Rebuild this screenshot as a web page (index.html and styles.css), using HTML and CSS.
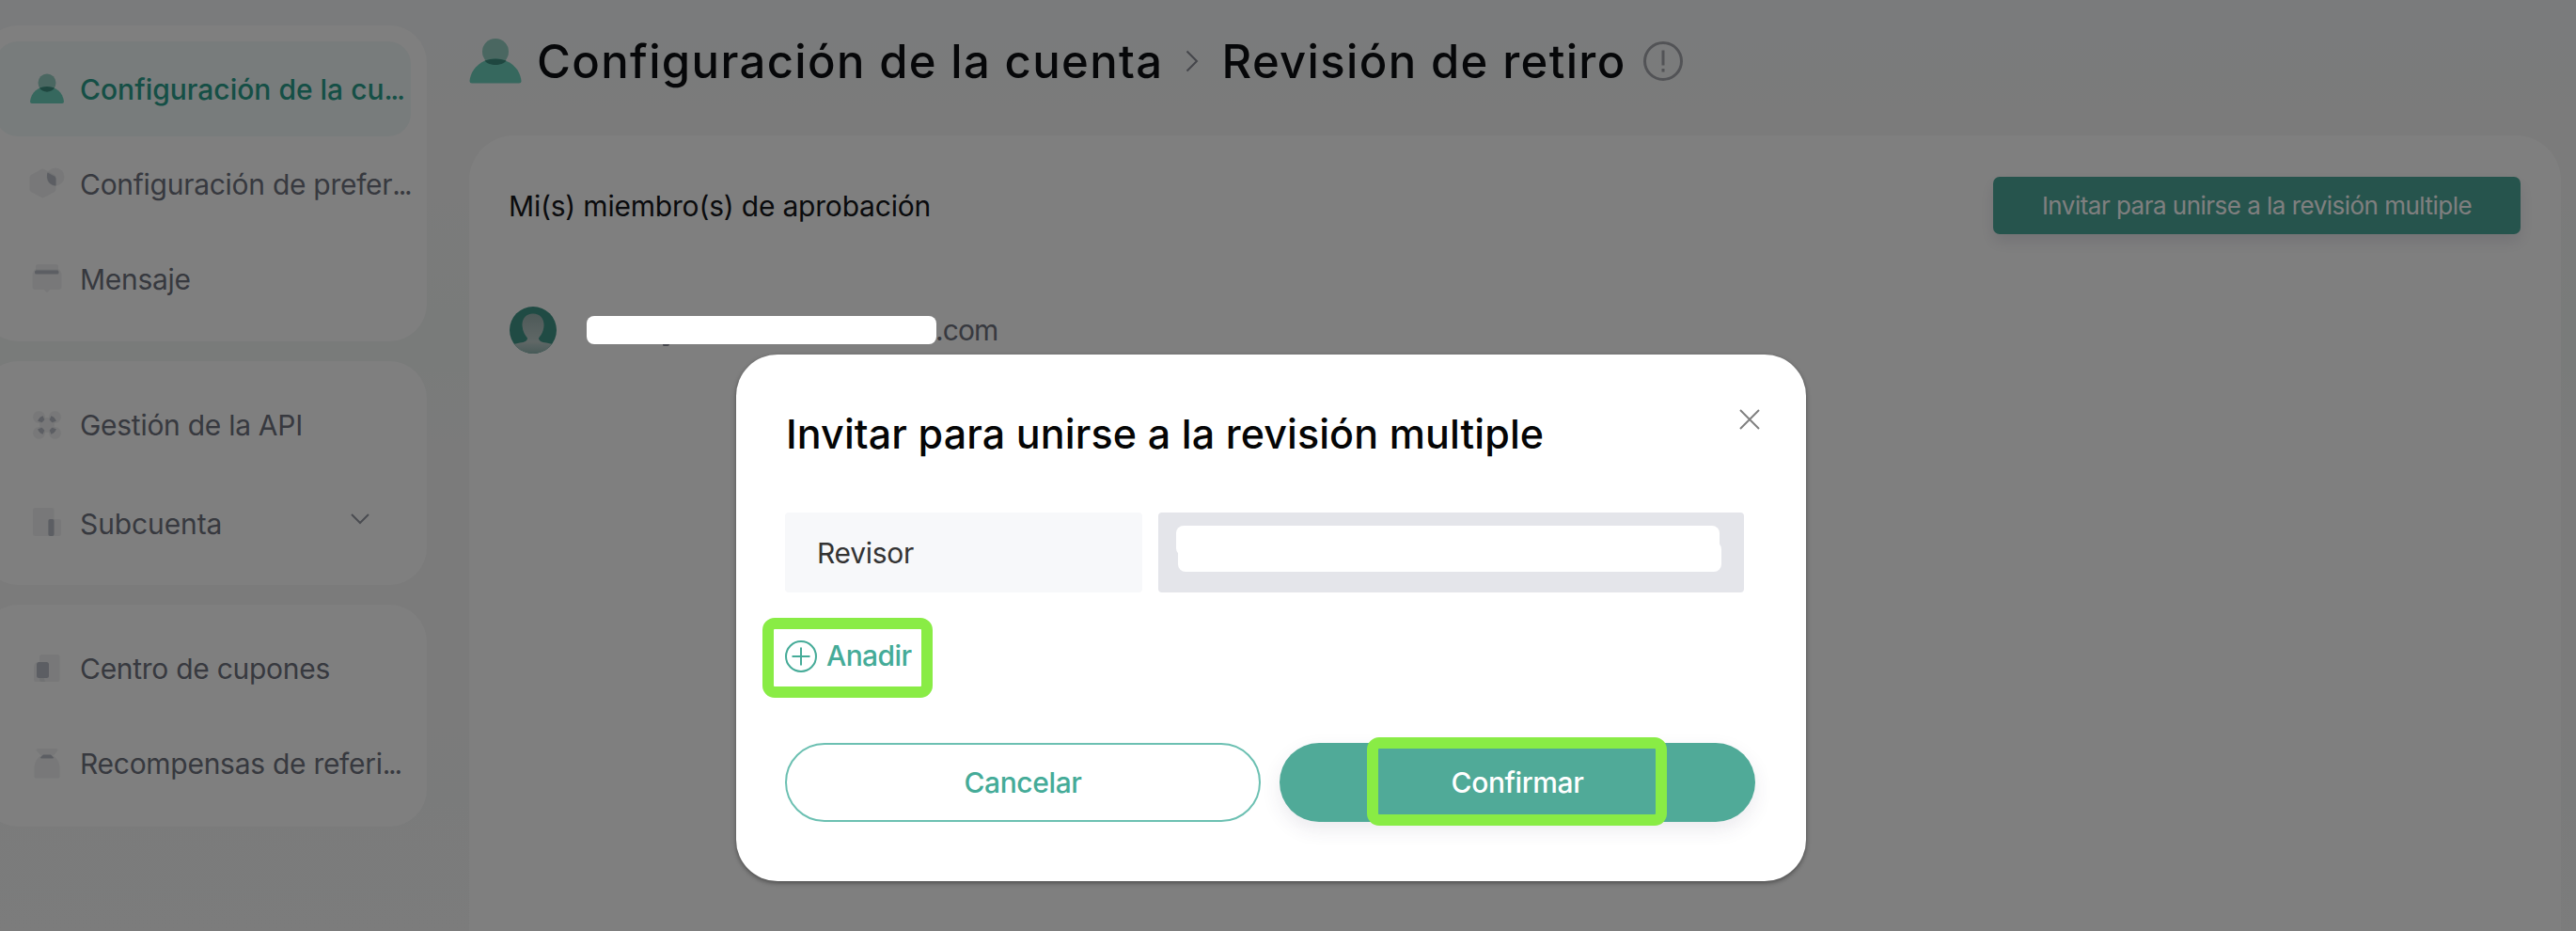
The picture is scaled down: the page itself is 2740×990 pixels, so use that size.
FILE: index.html
```html
<!DOCTYPE html>
<html lang="es">
<head>
    <meta charset="UTF-8">
    <meta name="viewport" content="width=device-width, initial-scale=1.0">
    <title>Revisión de retiro</title>
    <link rel="stylesheet" href="styles.css">
</head>
<body>
    <div class="page">
        <nav class="sidebar">
            <ul class="menu menu-account">
                <li class="item active">
                    <svg class="icon" viewBox="0 0 40 40"><circle class="back" cx="20" cy="13" r="9.5"/><path class="mid" d="M2 33C3 23 11 17 20 17s17 6 18 16q0 2-2 2H4q-2 0-2-2z"/><path class="dark" d="M12 18.500Q20 15.500 28 18.500C25 24 15 24 12 18.500z"/></svg>
                    <span>Configuración de la cu<span class="dots">...</span></span>
                </li>
                <li class="item">
                    <svg class="icon" viewBox="0 0 40 40"><path class="soft" d="M14 4q1.500-.8 3 0l11 6q1.500 1 1.500 2.500v13q0 1.500-1.500 2.500l-11 6q-1.500.8-3 0L3 28q-1.500-1-1.500-2.500v-13Q1.500 11 3 10z"/><circle class="soft" cx="29" cy="12" r="9.500"/><path class="deep" d="M20.500 7.500l7.500 4q1.500 1 1.500 2.500v7.500c-7 0-11-7-9-14z"/></svg>
                    <span>Configuración de prefer<span class="dots">...</span></span>
                </li>
                <li class="item">
                    <svg class="icon" viewBox="0 0 40 40"><rect class="soft" x="8" y="4" width="24" height="9" rx="2"/><path class="soft" d="M7 9.500h26q2.500 3 2.500 5V28q0 3-3 3h-9L20 34l-3.500-3h-9q-3 0-3-3V14.500q0-2 2.500-5z"/><rect class="deep" x="7" y="10.500" width="25.500" height="4" rx="1.500"/></svg>
                    <span>Mensaje</span>
                </li>
            </ul>
            <ul class="menu menu-api">
                <li class="item">
                    <svg class="icon" viewBox="0 0 40 40"><g class="soft"><circle cx="11.500" cy="11.500" r="6.500"/><circle cx="28.500" cy="11.500" r="6.500"/><circle cx="11.500" cy="28.500" r="6.500"/><circle cx="28.500" cy="28.500" r="6.500"/><circle cx="20" cy="20" r="8"/></g><path class="ring" d="M12.500 16.500q1-3 4-4M23.500 12.500q3 1 4 4M27.500 23.500q-1 3-4 4M16.500 27.500q-3-1-4-4"/></svg>
                    <span>Gestión de la API</span>
                </li>
                <li class="item">
                    <svg class="icon" viewBox="0 0 40 40"><rect class="soft" x="5" y="3" width="22.500" height="30" rx="2.500"/><rect class="soft" x="21" y="15" width="14" height="18" rx="2"/><rect class="deep" x="21.500" y="15" width="6" height="18" rx="2"/></svg>
                    <span>Subcuenta</span>
                    <svg class="arrow" viewBox="0 0 20 12"><path d="M1 1l9 9 9-9"/></svg>
                </li>
            </ul>
            <ul class="menu menu-rewards">
                <li class="item">
                    <svg class="icon" viewBox="0 0 40 40"><rect class="soft" x="12" y="5" width="21.500" height="29" rx="2.500"/><path class="soft" d="M12 13q-6 0-6 5v14q0 2 2 2h10z"/><rect class="deep" x="9" y="13" width="13" height="17" rx="2.500"/></svg>
                    <span>Centro de cupones</span>
                </li>
                <li class="item">
                    <svg class="icon" viewBox="0 0 40 40"><path class="soft" d="M10 4h20q2 0 1.500 2l-4 5H13L8.500 6Q8 4 10 4z"/><path class="soft" d="M14 11h12q7 4 7.500 13v10q0 1.500-1.500 1.500H8q-1.500 0-1.500-1.500V24Q7 15 14 11z"/><path class="deep" d="M16 10.500h8l3 3q0 1-1 1H14q-1 0-1-1z"/></svg>
                    <span>Recompensas de referi<span class="dots">...</span></span>
                </li>
            </ul>
        </nav>

        <main class="content">
            <header class="title">
                <svg class="title-icon" viewBox="0 0 56 48"><circle class="back" cx="28" cy="14" r="14"/><path class="mid" d="M.5 45C2 31 14 21.500 28 21.500S54 31 55.500 45q0 2.500-2.500 2.500H3Q.5 47.500.5 45z"/><path class="dark" d="M16.500 23.500Q28 19.500 39.500 23.500C35 29.500 21 29.500 16.500 23.500z"/></svg>
                <h1>Configuración de la cuenta</h1>
                <svg class="crumb" viewBox="0 0 14 24"><path d="M1.500 1.500L12 12 1.500 22.500"/></svg>
                <h1>Revisión de retiro</h1>
                <svg class="info" viewBox="0 0 42 42"><circle cx="21" cy="21" r="19.500"/><path d="M21 9.500v16M21 29v3.500"/></svg>
            </header>

            <section class="panel">
                <div class="panel-head">
                    <h2>Mi(s) miembro(s) de aprobación</h2>
                    <button class="invite">Invitar para unirse a la revisión multiple</button>
                </div>
                <div class="member">
                    <svg class="avatar" viewBox="0 0 50 50">
                        <defs>
                            <clipPath id="round"><circle cx="25" cy="25" r="25"/></clipPath>
                            <linearGradient id="body" x1="0" y1="0" x2="0" y2="1"><stop offset="0" stop-color="#9cb4b1"/><stop offset=".7" stop-color="#c0cfcd"/><stop offset="1" stop-color="#8fb5b0"/></linearGradient>
                        </defs>
                        <g clip-path="url(#round)">
                            <rect width="50" height="50" fill="#409789"/>
                            <path d="M25 7.500c8 0 12 6 11.500 13-.4 6-3 10-5.500 13 0 3 3 4.500 8 5l9 2v10H2v-10l9-2c5-.5 8-2 8-5-2.500-3-5-7-5.500-13C13 13.500 17 7.500 25 7.500z" fill="url(#body)"/>
                        </g>
                    </svg>
                    <span class="mail">.com</span>
                </div>
            </section>
        </main>
    </div>

    <div class="overlay">
        <span class="mask mask-mail"></span>
        <div class="modal">
            <div class="modal-head">
                <h3>Invitar para unirse a la revisión multiple</h3>
                <svg class="close" viewBox="0 0 22 22"><path d="M1 1l20 20M21 1L1 21"/></svg>
            </div>
            <div class="field">
                <label>Revisor</label>
                <div class="input">
                    <span class="mask mask-top"></span>
                    <span class="mask mask-bottom"></span>
                </div>
            </div>
            <div class="add">
                <svg class="plus" viewBox="0 0 34 34"><circle cx="17" cy="17" r="16"/><path d="M17 7.500v19M7.500 17h19"/></svg>
                <span>Anadir</span>
            </div>
            <div class="actions">
                <button class="btn cancel">Cancelar</button>
                <button class="btn confirm">Confirmar</button>
            </div>
        </div>
    </div>
</body>
</html>
```

FILE: styles.css
```css
*,
*::before,
*::after {
    box-sizing: border-box;
}

body {
    margin: 0;
    height: 990px;
    overflow: hidden;
    font-family: Inter, "Open Sans", sans-serif;
    font-size: 30px;
    letter-spacing: -0.28px;
    color: #6f737f;
    background: linear-gradient(#f5f6f9 0, #f5f7f7 80px, #f7f7f6 150px, #f6f6f6 210px, #f3f6f5 330px, #f3f6f5 390px, #f7f7f7 500px, #f7f7f7 690px, #f5f7f7 850px, #f8f8f8 990px);
}

h1, h2, h3, ul {
    margin: 0;
    padding: 0;
    font-weight: 400;
}

button {
    font-family: inherit;
    border: none;
    padding: 0;
}

svg {
    display: block;
    flex: none;
}

h1, h2, h3, .item {
    white-space: nowrap;
}

.page {
    display: flex;
    gap: 45px;
    height: 990px;
    overflow: hidden;
}

/* sidebar */
.sidebar {
    flex: none;
    width: 474px;
    margin-left: -20px;
    padding-top: 27px;
    display: flex;
    flex-direction: column;
    gap: 21px;
}

.menu {
    list-style: none;
    background: #fff;
    border-radius: 40px;
    padding: 17px 17px 0 15px;
}

.menu-account {
    height: 336px;
}

.menu-api {
    height: 238px;
}

.menu-rewards {
    height: 236px;
}

.item {
    display: flex;
    align-items: center;
    height: 101px;
    padding-left: 35px;
    border-radius: 24px;
}

.menu-api .item + .item {
    margin-top: 4px;
    letter-spacing: -0.1px;
}

.item.active {
    background: #f1f8f8;
    color: #2b9f8c;
    font-weight: 500;
    letter-spacing: 0;
}

.dots,
.active .dots {
    letter-spacing: -2.3px;
}

.icon {
    width: 40px;
    height: 40px;
    margin-right: 15px;
}

.soft {
    fill: #6f7481;
    fill-opacity: .1;
}

.deep {
    fill: #b8bcc6;
}

.ring {
    fill: none;
    stroke: #b8bcc6;
    stroke-width: 5;
}

.mid {
    fill: #6cd0bc;
}

.back {
    fill: #94cec2;
}

.dark {
    fill: #3f8f80;
}

.arrow {
    width: 20px;
    height: 12px;
    margin: -10px 0 0 137px;
    fill: none;
    stroke: #9598a2;
    stroke-width: 2;
}

/* content */
.content {
    flex: none;
    width: 2225px;
}

.title {
    display: flex;
    align-items: center;
    height: 144px;
    padding-bottom: 14px;
}

.title h1 {
    font-size: 49px;
    font-weight: 500;
    letter-spacing: 1.35px;
    color: #0d0f12;
}

.title-icon {
    width: 56px;
    height: 48px;
    margin-right: 16px;
}

.crumb {
    width: 14px;
    height: 24px;
    margin: 0 24px;
    fill: none;
    stroke: #8a8d97;
    stroke-width: 2;
}

.info {
    width: 42px;
    height: 42px;
    margin-left: 18px;
    fill: none;
    stroke: #a4a6ac;
    stroke-width: 3;
}

.panel {
    height: 900px;
    padding: 44px 43px;
    background: #fff;
    border-radius: 48px;
}

.panel-head {
    display: flex;
    align-items: center;
    justify-content: space-between;
}

.panel-head h2 {
    margin-left: -1px;
    font-size: 30px;
    letter-spacing: -0.2px;
    color: #15161a;
}

.invite {
    width: 561px;
    height: 61px;
    padding-bottom: 1px;
    font-size: 26px;
    letter-spacing: -0.52px;
    color: #fff;
    background: #4ca89a;
    border-radius: 7px;
    box-shadow: 0 8px 16px rgba(60, 50, 90, .12);
}

.member {
    display: flex;
    align-items: center;
    height: 50px;
    margin-top: 77px;
}

.avatar {
    width: 50px;
    height: 50px;
}

.mail {
    margin-left: 403px;
    letter-spacing: -0.9px;
}

/* modal */
.overlay {
    position: absolute;
    inset: 0;
    padding: 377px 0 0 783px;
    background: rgba(0, 0, 0, .5);
}

.mask {
    background: #fff;
    border-radius: 8px;
}

.mask-mail {
    position: absolute;
    left: 624px;
    top: 336px;
    width: 372px;
    height: 30px;
}

/* tail of the address left showing under the mask */
.mask-mail::after {
    content: "";
    position: absolute;
    left: 81px;
    top: 30px;
    width: 7px;
    height: 2px;
    background: #45464c;
    border-radius: 0 0 3px 2px;
}

.modal {
    width: 1138px;
    height: 560px;
    padding: 0 54px 0 52px;
    background: #fff;
    border-radius: 44px;
    box-shadow: 0 2px 5px rgba(0, 0, 0, .4);
}

.modal-head {
    display: flex;
    justify-content: space-between;
    height: 168px;
    padding-top: 58px;
}

.modal-head h3 {
    margin-left: 1px;
    font-size: 43px;
    line-height: 53px;
    font-weight: 500;
    letter-spacing: 0.1px;
    color: #050505;
}

.close {
    width: 22px;
    height: 22px;
    margin-right: -5px;
    fill: none;
    stroke: #808080;
    stroke-width: 2;
}

.field {
    display: flex;
    gap: 17px;
}

.field label {
    display: flex;
    align-items: center;
    width: 380px;
    height: 85px;
    padding-left: 34px;
    color: #333;
    background: #f7f8fa;
    border-radius: 4px;
}

.input {
    width: 623px;
    height: 85px;
    padding: 14px 0 0 19px;
    background: #e4e5ea;
    border-radius: 4px;
}

.mask-top,
.mask-bottom {
    display: block;
    width: 578px;
}

.mask-top {
    height: 32px;
}

.mask-bottom {
    height: 32px;
    margin: -15px 0 0 2px;
}

.add {
    position: relative;
    display: flex;
    align-items: center;
    gap: 10px;
    height: 34px;
    margin-top: 51px;
    color: #45ab98;
    font-weight: 500;
    letter-spacing: -0.6px;
}

.add span {
    padding-bottom: 3px;
}

.plus {
    width: 34px;
    height: 34px;
    fill: none;
    stroke: #45ab98;
    stroke-width: 2;
}

.add::after,
.confirm::after {
    content: "";
    position: absolute;
    border: 12px solid #89ec45;
    border-radius: 13px;
}

.add::after {
    left: -24px;
    top: -24px;
    width: 181px;
    height: 85px;
}

.actions {
    display: flex;
    gap: 20px;
    margin-top: 75px;
}

.btn {
    position: relative;
    width: 506px;
    height: 84px;
    padding-bottom: 1px;
    font-size: 30px;
    font-weight: 500;
    letter-spacing: -0.4px;
    border-radius: 42px;
}

.cancel {
    color: #45ab98;
    background: #fff;
    border: 2px solid #6cc0b2;
}

.confirm {
    color: #fff;
    background: #50aa98;
    box-shadow: 0 8px 20px rgba(60, 50, 90, .1);
}

.confirm::after {
    left: 93px;
    top: -6px;
    width: 319px;
    height: 94px;
}
```
